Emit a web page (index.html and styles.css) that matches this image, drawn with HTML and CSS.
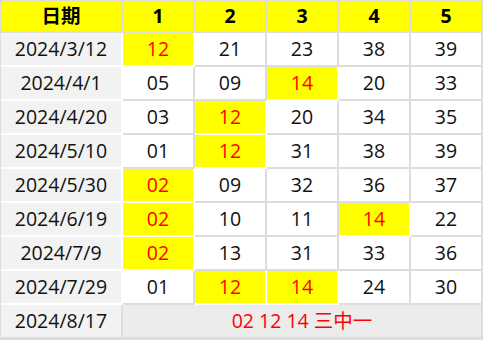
FILE: index.html
```html
<!DOCTYPE html>
<html lang="zh">
<head>
<meta charset="utf-8">
<title>开奖记录</title>
<link rel="stylesheet" href="styles.css">
</head>
<body>
<table class="lotto">
  <colgroup>
    <col class="col-date">
    <col class="col-num"><col class="col-num"><col class="col-num"><col class="col-num"><col class="col-num">
  </colgroup>
  <thead>
    <tr><th>日期</th><th>1</th><th>2</th><th>3</th><th>4</th><th>5</th></tr>
  </thead>
  <tbody>
    <tr><td class="date">2024/3/12</td><td class="hit">12</td><td>21</td><td>23</td><td>38</td><td>39</td></tr>
    <tr><td class="date">2024/4/1</td><td>05</td><td>09</td><td class="hit">14</td><td>20</td><td>33</td></tr>
    <tr><td class="date">2024/4/20</td><td>03</td><td class="hit">12</td><td>20</td><td>34</td><td>35</td></tr>
    <tr><td class="date">2024/5/10</td><td>01</td><td class="hit">12</td><td>31</td><td>38</td><td>39</td></tr>
    <tr><td class="date">2024/5/30</td><td class="hit">02</td><td>09</td><td>32</td><td>36</td><td>37</td></tr>
    <tr><td class="date">2024/6/19</td><td class="hit">02</td><td>10</td><td>11</td><td class="hit">14</td><td>22</td></tr>
    <tr><td class="date">2024/7/9</td><td class="hit">02</td><td>13</td><td>31</td><td>33</td><td>36</td></tr>
    <tr><td class="date">2024/7/29</td><td>01</td><td class="hit">12</td><td class="hit">14</td><td>24</td><td>30</td></tr>
    <tr class="summary"><td class="date">2024/8/17</td><td class="result" colspan="5">02 12 14 三中一</td></tr>
  </tbody>
</table>
</body>
</html>
```
FILE: styles.css
```css
html, body {
  margin: 0;
  background: #dddddd;
}
body {
  padding: 1px 0 0 1px;
}
.lotto {
  border-collapse: separate;
  border-spacing: 0;
  table-layout: fixed;
  width: 482px;
  font-family: "Open Sans", "Noto Sans CJK SC", sans-serif;
  font-size: 19.5px;
  line-height: 1;
}
.col-date { width: 122px; }
.col-num { width: 72px; }
.lotto th,
.lotto td {
  padding: 0;
  text-align: center;
  vertical-align: middle;
  border-right: 2px solid #dddddd;
  border-bottom: 2px solid #dddddd;
  background: #ffffff;
  color: #111111;
  height: 32px;
  font-weight: normal;
}
.lotto th {
  height: 30px;
  background: #ffff00;
  color: #000000;
  font-weight: bold;
}
.lotto td.date {
  background: #f2f2f2;
  border-color: #ffffff;
}
.lotto td.hit {
  background: #ffff00;
  color: #ff0000;
  border-color: #ffffff;
}
.lotto .summary td.date {
  border-color: #dddddd;
}
.lotto td.result {
  background: #ececec;
  color: #ff0000;
}
```
